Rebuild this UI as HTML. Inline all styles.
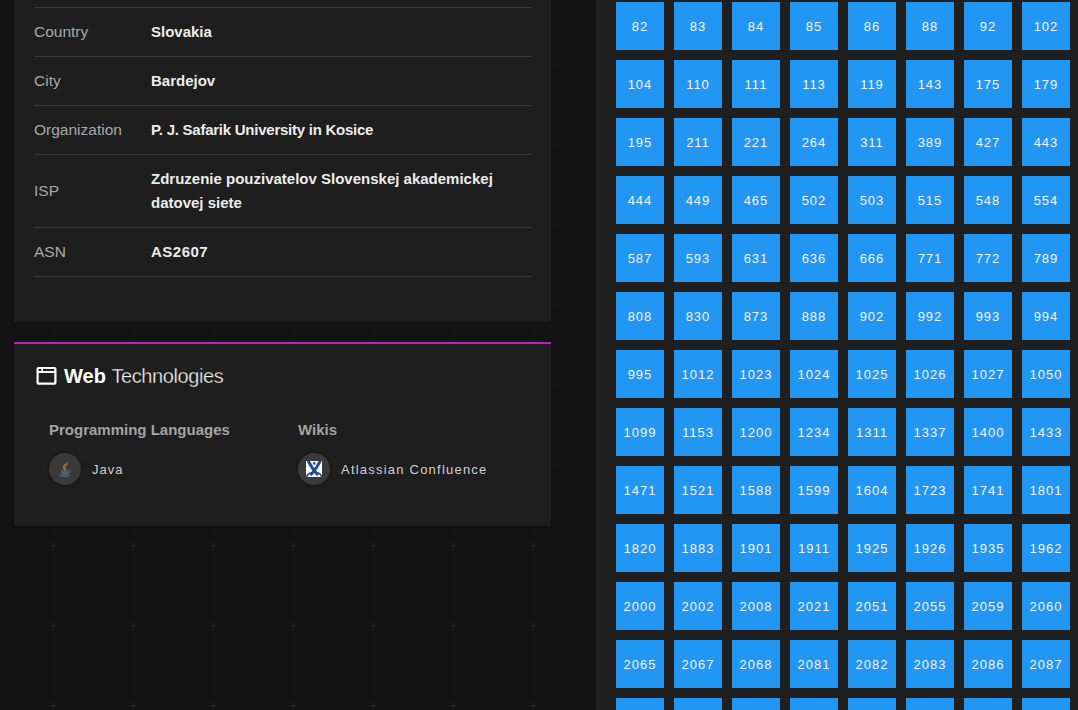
<!DOCTYPE html>
<html><head><meta charset="utf-8">
<style>
*{box-sizing:border-box;margin:0;padding:0}
html,body{width:1078px;height:710px;overflow:hidden}
body{background:#131313;font-family:"Liberation Sans",sans-serif;position:relative}
#grid{position:absolute;left:0;top:0}
.card{position:absolute;left:14px;width:537px;background:#1e1e1e;box-shadow:0 0 2px rgba(0,0,0,0.6)}
#c1{top:-40px;height:362px}
#c2{top:342px;height:184px;border-top:2px solid #bd1fbd}
table{position:absolute;left:20px;width:497px;border-collapse:collapse}
td{border-top:1px solid #3b3b3b;padding:12px 0;font-size:15px;line-height:24px;vertical-align:middle}
tr:last-child td{border-bottom:1px solid #3b3b3b}
td.l{color:#a8a8a8;width:117px;font-size:15.5px}
td.v{color:#ececec;font-weight:bold}
.hdr{position:absolute;left:0;top:0;font-size:20px;line-height:20px;color:#fff;white-space:nowrap}
#ico{position:absolute;left:22px;top:23px}
#htxt{position:absolute;left:50px;top:22px}
#htxt i{font-style:normal;letter-spacing:-0.4px;color:#f4f4f4;-webkit-text-stroke:0.35px #1e1e1e}
.sub{position:absolute;top:77px;font-size:15px;line-height:18px;font-weight:bold;color:#a3a3a3;white-space:nowrap}
.tech{position:absolute;top:109px;height:32px;white-space:nowrap}
.circ{position:absolute;left:0;top:0;width:32px;height:32px;border-radius:50%;background:#3a3a3a;box-shadow:0 0 3px rgba(0,0,0,0.45)}
.circ svg{position:absolute;left:0;top:0}
.tname{position:absolute;top:8px;font-size:13px;letter-spacing:1px;color:#d0d0d0;line-height:17px}
#panel{position:absolute;left:596px;top:0;width:482px;height:710px;background:#1f1f1f}
.box{position:absolute;width:48px;height:48px;background:#2196f3;color:#f4f4f4;font-size:13px;letter-spacing:1px;text-align:center;line-height:50px}
</style></head><body>
<svg id="grid" width="1078" height="710">
<defs><pattern id="gp" x="13" y="25" width="80" height="80" patternUnits="userSpaceOnUse">
<rect x="40" y="0" width="1" height="80" fill="#161616"/>
<rect x="0" y="40" width="80" height="1" fill="#161616"/>
<rect x="38" y="40" width="5" height="1" fill="#262626"/>
<rect x="40" y="38" width="1" height="5" fill="#262626"/>
</pattern></defs>
<rect width="1078" height="710" fill="url(#gp)"/>
</svg>
<div class="card" id="c1">
<table style="top:47px">
<tr><td class="l">Country</td><td class="v">Slovakia</td></tr>
<tr><td class="l">City</td><td class="v">Bardejov</td></tr>
<tr><td class="l">Organization</td><td class="v" style="letter-spacing:-0.25px">P. J. Safarik University in Kosice</td></tr>
<tr><td class="l">ISP</td><td class="v">Zdruzenie pouzivatelov Slovenskej akademickej<br>datovej siete</td></tr>
<tr><td class="l">ASN</td><td class="v" style="letter-spacing:0.5px">AS2607</td></tr>
</table>
</div>
<div class="card" id="c2">
<svg id="ico" width="22" height="20" viewBox="0 0 22 20"><path fill="#fff" fill-rule="evenodd" d="M2.5 0H18.5A2 2 0 0 1 20.5 2V15.8A2 2 0 0 1 18.5 17.8H2.5A2 2 0 0 1 0.5 15.8V2A2 2 0 0 1 2.5 0Z M2.7 2H5.3V4H2.7Z M7 2H18.3V4H7Z M2.7 6H18.3V15.6H2.7Z"/></svg>
<div id="htxt" class="hdr" style="position:absolute"><b>Web</b> <i>Technologies</i></div>
<div class="sub" style="left:35px">Programming Languages</div>
<div class="sub" style="left:284px">Wikis</div>
<div class="tech" style="left:35px"><div class="circ"><svg width="32" height="32" viewBox="0 0 32 32">
<path d="M15.6 16.9 C13.2 15.4 13.6 13.4 15.6 11.6 C17 10.4 18.2 9.6 18.4 8.3 C19.2 10 18 11.4 17 12.6 C16.2 13.6 16.6 15 17.3 16.4 C16.8 16.8 16.2 17 15.6 16.9Z" fill="#dc6f10"/>
<path d="M16.6 12.4 C15.6 13.6 15.8 15 16.4 16.2" fill="none" stroke="#3a3a3a" stroke-width="0.6"/>
<path d="M18.6 10.6 C19.6 11.4 19.3 12.4 18.3 13 C18.6 12.2 18.6 11.4 18.6 10.6Z" fill="#dc6f10"/>
<path d="M11.8 17.2 H19.4 L18.9 21.4 Q15.6 22.4 12.9 21.4Z" fill="#47667e"/>
<path d="M19.3 17.6 Q21.8 17.2 21.4 18.8 Q21 20 19.1 20.4" fill="none" stroke="#47667e" stroke-width="1.1"/>
<path d="M10.2 22.2 Q15.8 25.2 21.6 22.4 Q15.8 23.4 10.2 22.2Z" fill="#47667e" stroke="#47667e" stroke-width="1"/>
</svg></div><div class="tname" style="left:43px">Java</div></div>
<div class="tech" style="left:284px"><div class="circ"><svg width="32" height="32" viewBox="0 0 32 32">
<rect x="8" y="8" width="16" height="16" fill="#fff"/>
<g transform="translate(8,8)" fill="none" stroke="#1f4e8c" stroke-linecap="round">
<path d="M2.6 0.8 Q6 7.5 11.2 13.2" stroke-width="3"/>
<path d="M13.8 0.8 Q10.5 7.5 5.3 13.2" stroke-width="3"/>
<path d="M5.6 12.2 Q3 11.2 0.8 15.3" stroke-width="1.7"/>
<path d="M11 12.2 Q13.6 11.2 15.6 15.3" stroke-width="1.7"/>
</g>
<circle cx="16.3" cy="10.4" r="1.3" fill="#1f4e8c"/>
</svg></div><div class="tname" style="left:43px;letter-spacing:1.22px">Atlassian Confluence</div></div>
</div>
<div id="panel">
<div class="box" style="left:20px;top:2px">82</div>
<div class="box" style="left:78px;top:2px">83</div>
<div class="box" style="left:136px;top:2px">84</div>
<div class="box" style="left:194px;top:2px">85</div>
<div class="box" style="left:252px;top:2px">86</div>
<div class="box" style="left:310px;top:2px">88</div>
<div class="box" style="left:368px;top:2px">92</div>
<div class="box" style="left:426px;top:2px">102</div>
<div class="box" style="left:20px;top:60px">104</div>
<div class="box" style="left:78px;top:60px">110</div>
<div class="box" style="left:136px;top:60px">111</div>
<div class="box" style="left:194px;top:60px">113</div>
<div class="box" style="left:252px;top:60px">119</div>
<div class="box" style="left:310px;top:60px">143</div>
<div class="box" style="left:368px;top:60px">175</div>
<div class="box" style="left:426px;top:60px">179</div>
<div class="box" style="left:20px;top:118px">195</div>
<div class="box" style="left:78px;top:118px">211</div>
<div class="box" style="left:136px;top:118px">221</div>
<div class="box" style="left:194px;top:118px">264</div>
<div class="box" style="left:252px;top:118px">311</div>
<div class="box" style="left:310px;top:118px">389</div>
<div class="box" style="left:368px;top:118px">427</div>
<div class="box" style="left:426px;top:118px">443</div>
<div class="box" style="left:20px;top:176px">444</div>
<div class="box" style="left:78px;top:176px">449</div>
<div class="box" style="left:136px;top:176px">465</div>
<div class="box" style="left:194px;top:176px">502</div>
<div class="box" style="left:252px;top:176px">503</div>
<div class="box" style="left:310px;top:176px">515</div>
<div class="box" style="left:368px;top:176px">548</div>
<div class="box" style="left:426px;top:176px">554</div>
<div class="box" style="left:20px;top:234px">587</div>
<div class="box" style="left:78px;top:234px">593</div>
<div class="box" style="left:136px;top:234px">631</div>
<div class="box" style="left:194px;top:234px">636</div>
<div class="box" style="left:252px;top:234px">666</div>
<div class="box" style="left:310px;top:234px">771</div>
<div class="box" style="left:368px;top:234px">772</div>
<div class="box" style="left:426px;top:234px">789</div>
<div class="box" style="left:20px;top:292px">808</div>
<div class="box" style="left:78px;top:292px">830</div>
<div class="box" style="left:136px;top:292px">873</div>
<div class="box" style="left:194px;top:292px">888</div>
<div class="box" style="left:252px;top:292px">902</div>
<div class="box" style="left:310px;top:292px">992</div>
<div class="box" style="left:368px;top:292px">993</div>
<div class="box" style="left:426px;top:292px">994</div>
<div class="box" style="left:20px;top:350px">995</div>
<div class="box" style="left:78px;top:350px">1012</div>
<div class="box" style="left:136px;top:350px">1023</div>
<div class="box" style="left:194px;top:350px">1024</div>
<div class="box" style="left:252px;top:350px">1025</div>
<div class="box" style="left:310px;top:350px">1026</div>
<div class="box" style="left:368px;top:350px">1027</div>
<div class="box" style="left:426px;top:350px">1050</div>
<div class="box" style="left:20px;top:408px">1099</div>
<div class="box" style="left:78px;top:408px">1153</div>
<div class="box" style="left:136px;top:408px">1200</div>
<div class="box" style="left:194px;top:408px">1234</div>
<div class="box" style="left:252px;top:408px">1311</div>
<div class="box" style="left:310px;top:408px">1337</div>
<div class="box" style="left:368px;top:408px">1400</div>
<div class="box" style="left:426px;top:408px">1433</div>
<div class="box" style="left:20px;top:466px">1471</div>
<div class="box" style="left:78px;top:466px">1521</div>
<div class="box" style="left:136px;top:466px">1588</div>
<div class="box" style="left:194px;top:466px">1599</div>
<div class="box" style="left:252px;top:466px">1604</div>
<div class="box" style="left:310px;top:466px">1723</div>
<div class="box" style="left:368px;top:466px">1741</div>
<div class="box" style="left:426px;top:466px">1801</div>
<div class="box" style="left:20px;top:524px">1820</div>
<div class="box" style="left:78px;top:524px">1883</div>
<div class="box" style="left:136px;top:524px">1901</div>
<div class="box" style="left:194px;top:524px">1911</div>
<div class="box" style="left:252px;top:524px">1925</div>
<div class="box" style="left:310px;top:524px">1926</div>
<div class="box" style="left:368px;top:524px">1935</div>
<div class="box" style="left:426px;top:524px">1962</div>
<div class="box" style="left:20px;top:582px">2000</div>
<div class="box" style="left:78px;top:582px">2002</div>
<div class="box" style="left:136px;top:582px">2008</div>
<div class="box" style="left:194px;top:582px">2021</div>
<div class="box" style="left:252px;top:582px">2051</div>
<div class="box" style="left:310px;top:582px">2055</div>
<div class="box" style="left:368px;top:582px">2059</div>
<div class="box" style="left:426px;top:582px">2060</div>
<div class="box" style="left:20px;top:640px">2065</div>
<div class="box" style="left:78px;top:640px">2067</div>
<div class="box" style="left:136px;top:640px">2068</div>
<div class="box" style="left:194px;top:640px">2081</div>
<div class="box" style="left:252px;top:640px">2082</div>
<div class="box" style="left:310px;top:640px">2083</div>
<div class="box" style="left:368px;top:640px">2086</div>
<div class="box" style="left:426px;top:640px">2087</div>
<div class="box" style="left:20px;top:698px">2095</div>
<div class="box" style="left:78px;top:698px">2096</div>
<div class="box" style="left:136px;top:698px">2121</div>
<div class="box" style="left:194px;top:698px">2154</div>
<div class="box" style="left:252px;top:698px">2181</div>
<div class="box" style="left:310px;top:698px">2222</div>
<div class="box" style="left:368px;top:698px">2345</div>
<div class="box" style="left:426px;top:698px">2351</div>
</div>
</body></html>
